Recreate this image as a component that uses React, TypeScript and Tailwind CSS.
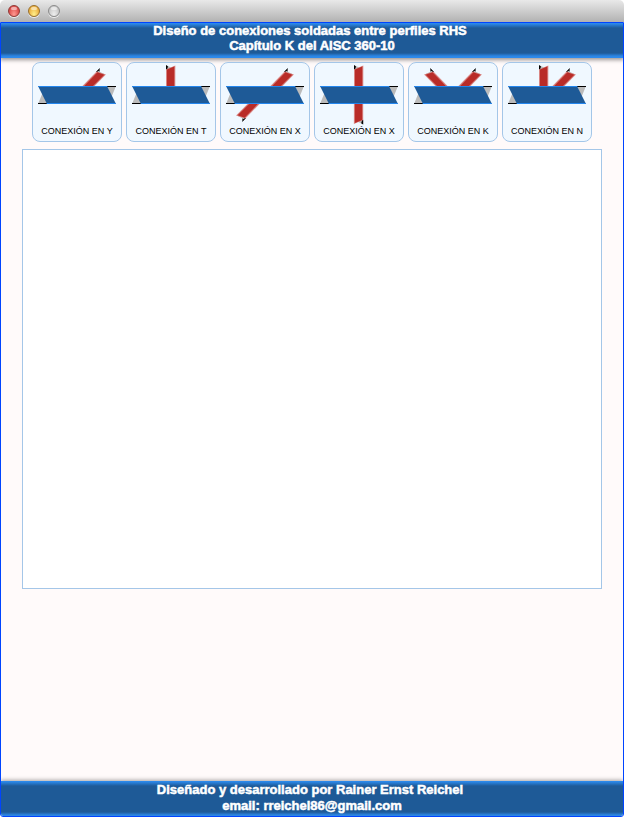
type Kind = 'Y' | 'T' | 'X' | 'CROSS' | 'K' | 'N';

const cards: { kind: Kind; label: string }[] = [
  { kind: 'Y', label: 'CONEXIÓN EN Y' },
  { kind: 'T', label: 'CONEXIÓN EN T' },
  { kind: 'X', label: 'CONEXIÓN EN X' },
  { kind: 'CROSS', label: 'CONEXIÓN EN X' },
  { kind: 'K', label: 'CONEXIÓN EN K' },
  { kind: 'N', label: 'CONEXIÓN EN N' },
];

function Diagonal({ transform }: { transform?: string }) {
  return (
    <g transform={transform}>
      <path d="M64 10.5L67.4 7.5L68 10L73.5 12.5L66 13Z" fill="#bbb" />
      <path d="M64 9.8L67.8 5.9L67.4 9.4L66.4 8.8L64.8 10.4Z" fill="#000" />
      <path d="M49.5 25L64.6 9.6L73.9 12.6L61.6 25Z" fill="#d98582" />
      <path d="M51.2 25L65.4 10.2L72.4 12.8L60 25Z" fill="#b92c28" />
    </g>
  );
}

function Vertical({ transform }: { transform?: string }) {
  return (
    <g transform={transform}>
      <path d="M40 3L46 6L49 4V8H40Z" fill="#bbb" />
      <path d="M40 3L42 4.4L41 7.5H40Z" fill="#000" />
      <path d="M40 7.5L49.3 3.5V25H40Z" fill="#d98582" />
      <path d="M41 7.5L48.3 4.5V25H41Z" fill="#b92c28" />
    </g>
  );
}

function Joint({ kind }: { kind: Kind }) {
  return (
    <svg viewBox="1 1 88 62" className="block h-[62px] w-[88px] shrink-0">
      {(kind === 'Y' || kind === 'X' || kind === 'K' || kind === 'N') && <Diagonal />}
      {kind === 'X' && <Diagonal transform="rotate(180 45 33)" />}
      {kind === 'K' && <Diagonal transform="matrix(-1 0 0 1 90 0)" />}
      {(kind === 'T' || kind === 'CROSS') && <Vertical />}
      {kind === 'CROSS' && <Vertical transform="rotate(180 44.6 32.8)" />}
      {kind === 'N' && <Vertical transform="translate(-3 0)" />}
      <path d="M75 24H84L79.5 35Z M6 42L10.5 31L16 42Z" fill="#bbb" />
      <path d="M75 24.5H84M6 41.5H15" stroke="#000" strokeWidth="1" />
      <path d="M6 24H75L84 42H15Z" fill="#1e5a97" />
      <path d="M6 24H75L75.5 25H6.5Z M14.5 41H83.5L84 42H15Z" fill="#2386ee" />
    </svg>
  );
}

function Light({ tone }: { tone: string }) {
  return (
    <span className={`flex h-3 w-3 justify-center rounded-full border shadow-[0_1px_0_#eee] ${tone}`}>
      <span className="mt-px h-[3px] w-[6px] rounded-full bg-white/50" />
    </span>
  );
}

const band =
  'text-center font-["Liberation_Sans",Arial,sans-serif] text-[13px] font-bold text-white [-webkit-text-stroke:0.5px_white]';

export default function App() {
  return (
    <div className="flex h-[817px] w-[624px] flex-col overflow-hidden bg-white font-['Liberation_Sans',Arial,sans-serif]">
      <div className="flex h-[22px] shrink-0 items-center gap-2 rounded-t-[5px] bg-linear-to-b from-[#e9e9e9] to-[#b2b2b2] pl-2">
        <Light tone="border-[#8f3936] bg-radial-[at_50%_85%] from-[#ff9a92] to-[#cf3030]" />
        <Light tone="border-[#99702c] bg-radial-[at_50%_85%] from-[#fff08b] to-[#e39826]" />
        <Light tone="border-[#8b8b8b] bg-radial-[at_50%_85%] from-[#eeeeee] to-[#b9b9b9]" />
      </div>

      <div className="flex h-[795px] shrink-0 flex-col overflow-hidden rounded-b-[3px] border border-[#0044ff] bg-[#fffafa]">
        <header
          className={`${band} h-[35px] shrink-0 bg-[linear-gradient(#2b8cf0,#2b85e3_1px,#1e5a97_5px,#1e5a97_30px,#2b85e3_33px,#2b8cf0)] pr-1 leading-[15px] shadow-[0_1px_4px_1px_rgba(0,0,0,0.4)]`}
        >
          <div>Diseño de conexiones soldadas entre perfiles RHS</div>
          <div className="pl-1">Capítulo K del AISC 360-10</div>
        </header>

        <nav className="mt-1 flex shrink-0 justify-center gap-1">
          {cards.map(({ kind, label }, i) => (
            <button
              key={i}
              className="flex h-20 w-[90px] flex-col items-center overflow-hidden rounded-[8px] border border-[#a4c6e8] bg-[#f0f8ff]"
            >
              <Joint kind={kind} />
              <span className="whitespace-nowrap text-[9px] leading-[12px] text-black">{label}</span>
            </button>
          ))}
        </nav>

        <main className="mx-auto mt-[7px] h-[440px] w-[580px] shrink-0 border border-[#a4c6e8] bg-white" />

        <footer
          className={`${band} mt-auto h-[35px] shrink-0 bg-[linear-gradient(#2b8cf0,#2b85e3_1px,#1e5a97_5px,#1e5a97_31px,#2b85e3_34px)] pt-px pr-1 leading-4 shadow-[0_-1px_4px_rgba(0,0,0,0.35)]`}
        >
          <div>Diseñado y desarrollado por Rainer Ernst Reichel</div>
          <div className="pl-1">email: rreichel86@gmail.com</div>
        </footer>
      </div>
    </div>
  );
}
